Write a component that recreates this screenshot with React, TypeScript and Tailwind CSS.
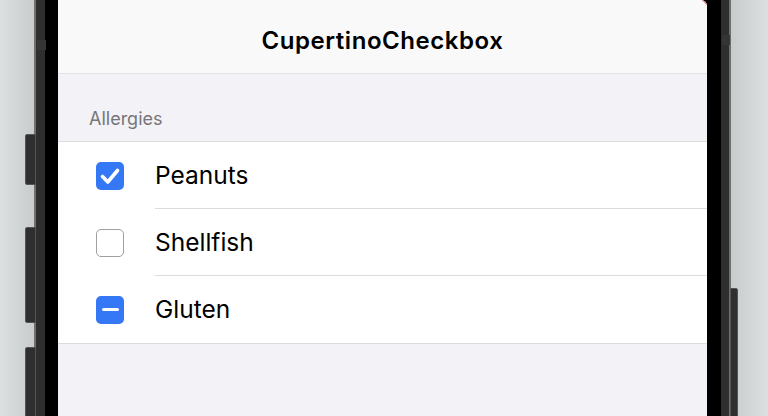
import React from "react";

type State = "checked" | "unchecked" | "mixed";

function Box({ state }: { state: State }) {
  if (state === "unchecked") {
    return <div className="w-[28px] h-[28px] rounded-[5px] border-[1.5px] border-[#a0a0a3] bg-white" />;
  }
  return (
    <div className="w-[28px] h-[28px] rounded-[5px] bg-[#3478f6] flex items-center justify-center">
      {state === "checked" ? (
        <svg width="28" height="28" viewBox="0 0 28 28">
          <path d="M6.5 14.5 L11.8 20 L21.5 8.5" fill="none" stroke="white" strokeWidth="3.6" strokeLinecap="round" strokeLinejoin="round" />
        </svg>
      ) : (
        <div className="w-[17px] h-[3.5px] rounded-full bg-white" />
      )}
    </div>
  );
}

function Row({ label, state, last }: { label: string; state: State; last?: boolean }) {
  return (
    <div className="flex items-stretch h-[67px]">
      <div className="w-[97px] shrink-0 flex items-center pl-[38px]">
        <Box state={state} />
      </div>
      <div className={`flex-1 flex items-center ${last ? "" : "border-b border-[#dcdcde]"}`}>
        <span className="text-[24.5px] text-black leading-none">{label}</span>
      </div>
    </div>
  );
}

export default function App() {
  return (
    <div
      className="w-[768px] h-[416px] relative overflow-hidden flex bg-gradient-to-r from-[#dfe2e3] via-[#dde0e1] to-[#dcdfe0]"
      style={{ fontFamily: "Inter, 'Noto Sans', sans-serif" }}
    >
      <div className="w-[34px] shrink-0 bg-gradient-to-r from-[#dde0e1] to-[#c9cccd]" />
      <div className="bg-[#6f6f6f] px-[2px] flex shrink-0">
        <div className="bg-[#2e2e2e] pl-[9px] pr-[8px] flex">
          <div className="bg-black pl-[13px] pr-[14px] flex">
            <div className="w-[649px] h-[416px] bg-[#f2f2f7] flex flex-col relative overflow-hidden rounded-tr-[6px]">
              <div className="h-[74px] shrink-0 bg-[#f9f9f9] border-b border-[#e4e4e6] flex items-center justify-center pt-[9px]">
                <span className="text-[24px] font-semibold text-black tracking-[0.55px]">CupertinoCheckbox</span>
              </div>
              <div className="h-[67px] shrink-0 flex items-end pl-[31px] pb-[13px]">
                <span className="text-[18px] text-[#76767a] leading-none">Allergies</span>
              </div>
              <div className="bg-white border-y border-[#dcdcde]">
                <Row label="Peanuts" state="checked" />
                <Row label="Shellfish" state="unchecked" />
                <Row label="Gluten" state="mixed" last />
              </div>
              <div className="absolute right-[-3px] top-[-3px] w-[8px] h-[6px] bg-[#d9534f] rotate-45 opacity-80" />
            </div>
          </div>
        </div>
      </div>
      <div className="flex-1 bg-gradient-to-r from-[#c9cccd] to-[#dde0e1]" />

      <div className="absolute left-[37px] top-[40px] w-[9px] h-[10px] bg-[#353535]" />
      <div className="absolute left-[722px] top-[35px] w-[8px] h-[10px] bg-[#353535]" />

      <div className="absolute left-[25px] top-[134px] w-[11px] h-[51px] bg-[#2f2f2f] border border-[#555] rounded-l-[2px]" />
      <div className="absolute left-[25px] top-[227px] w-[11px] h-[96px] bg-[#2f2f2f] border border-[#555] rounded-l-[2px]" />
      <div className="absolute left-[25px] top-[347px] w-[11px] h-[80px] bg-[#2f2f2f] border border-[#555] rounded-l-[2px]" />
      <div className="absolute left-[730px] top-[288px] w-[8px] h-[140px] bg-[#2f2f2f] border border-[#555] rounded-r-[2px]" />
    </div>
  );
}
